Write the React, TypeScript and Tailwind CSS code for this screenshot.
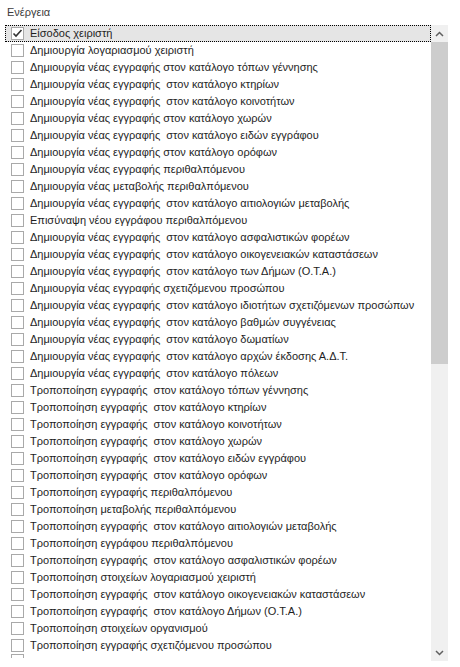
import React from "react";

const items: string[] = [
  "Είσοδος χειριστή",
  "Δημιουργία λογαριασμού χειριστή",
  "Δημιουργία νέας εγγραφής στον κατάλογο τόπων γέννησης",
  "Δημιουργία νέας εγγραφής  στον κατάλογο κτηρίων",
  "Δημιουργία νέας εγγραφής  στον κατάλογο κοινοτήτων",
  "Δημιουργία νέας εγγραφής στον κατάλογο χωρών",
  "Δημιουργία νέας εγγραφής  στον κατάλογο ειδών εγγράφου",
  "Δημιουργία νέας εγγραφής στον κατάλογο ορόφων",
  "Δημιουργία νέας εγγραφής περιθαλπόμενου",
  "Δημιουργία νέας μεταβολής περιθαλπόμενου",
  "Δημιουργία νέας εγγραφής  στον κατάλογο αιτιολογιών μεταβολής",
  "Επισύναψη νέου εγγράφου περιθαλπόμενου",
  "Δημιουργία νέας εγγραφής  στον κατάλογο ασφαλιστικών φορέων",
  "Δημιουργία νέας εγγραφής  στον κατάλογο οικογενειακών καταστάσεων",
  "Δημιουργία νέας εγγραφής  στον κατάλογο των Δήμων (Ο.Τ.Α.)",
  "Δημιουργία νέας εγγραφής σχετιζόμενου προσώπου",
  "Δημιουργία νέας εγγραφής  στον κατάλογο ιδιοτήτων σχετιζόμενων προσώπων",
  "Δημιουργία νέας εγγραφής  στον κατάλογο βαθμών συγγένειας",
  "Δημιουργία νέας εγγραφής  στον κατάλογο δωματίων",
  "Δημιουργία νέας εγγραφής  στον κατάλογο αρχών έκδοσης Α.Δ.Τ.",
  "Δημιουργία νέας εγγραφής  στον κατάλογο πόλεων",
  "Τροποποίηση εγγραφής  στον κατάλογο τόπων γέννησης",
  "Τροποποίηση εγγραφής  στον κατάλογο κτηρίων",
  "Τροποποίηση εγγραφής  στον κατάλογο κοινοτήτων",
  "Τροποποίηση εγγραφής  στον κατάλογο χωρών",
  "Τροποποίηση εγγραφής  στον κατάλογο ειδών εγγράφου",
  "Τροποποίηση εγγραφής  στον κατάλογο ορόφων",
  "Τροποποίηση εγγραφής περιθαλπόμενου",
  "Τροποποίηση μεταβολής περιθαλπόμενου",
  "Τροποποίηση εγγραφής  στον κατάλογο αιτιολογιών μεταβολής",
  "Τροποποίηση εγγράφου περιθαλπόμενου",
  "Τροποποίηση εγγραφής  στον κατάλογο ασφαλιστικών φορέων",
  "Τροποποίηση στοιχείων λογαριασμού χειριστή",
  "Τροποποίηση εγγραφής  στον κατάλογο οικογενειακών καταστάσεων",
  "Τροποποίηση εγγραφής  στον κατάλογο Δήμων (Ο.Τ.Α.)",
  "Τροποποίηση στοιχείων οργανισμού",
  "Τροποποίηση εγγραφής σχετιζόμενου προσώπου",
];

function Row({ text, checked }: { text: string; checked?: boolean }) {
  return (
    <div
      className={
        checked
          ? "h-[17px] flex items-center border border-dotted border-black bg-[#e5e5e5]"
          : "h-[17px] flex items-center border border-transparent"
      }
    >
      <div className="ml-[5px] w-[13px] h-[13px] border border-[#a9a9a9] bg-white flex items-center justify-center shrink-0">
        {checked && (
          <svg width="11" height="11" viewBox="0 0 11 11">
            <path d="M1.5 5.5 L4 8 L9.5 2" fill="none" stroke="#333" strokeWidth="1.6" />
          </svg>
        )}
      </div>
      <span className="ml-[6px] whitespace-pre text-[#1e1e1e]">{text}</span>
    </div>
  );
}

export default function App() {
  return (
    <div
      className="w-[460px] h-[667px] overflow-hidden bg-white text-[11px] leading-none"
      style={{ fontFamily: "Tahoma, 'Liberation Sans', sans-serif" }}
    >
      <div className="pl-[7px] pt-[7px] h-[25px] text-[#3c3c3c]">Ενέργεια</div>
      <div className="flex">
        {/* list */}
        <div className="ml-[5px] w-[426px] h-[640px] overflow-hidden">
          {items.map((t, i) => (
            <Row key={i} text={t} checked={i === 0} />
          ))}
          <div className="h-[17px] flex items-start">
            <div className="ml-[6px] w-[13px] h-[4px] border-t border-x border-[#a9a9a9]" />
          </div>
        </div>
        {/* scrollbar */}
        <div className="w-[17px] h-[636px] bg-[#f0f0f0] flex flex-col">
          <div className="h-[17px] flex items-center justify-center">
            <svg width="9" height="6" viewBox="0 0 9 6">
              <path d="M1 5 L4.5 1.5 L8 5" fill="none" stroke="#606060" strokeWidth="1.5" />
            </svg>
          </div>
          <div className="h-[322px] bg-[#cdcdcd]" />
          <div className="flex-1" />
          <div className="h-[17px] flex items-center justify-center">
            <svg width="9" height="6" viewBox="0 0 9 6">
              <path d="M1 1 L4.5 4.5 L8 1" fill="none" stroke="#606060" strokeWidth="1.5" />
            </svg>
          </div>
        </div>
      </div>
    </div>
  );
}
